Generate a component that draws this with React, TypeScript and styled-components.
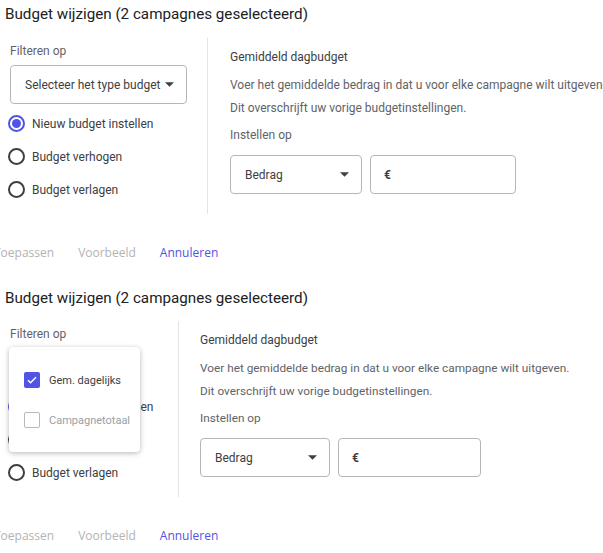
import React from "react";
import styled, { createGlobalStyle } from "styled-components";

const GlobalStyle = createGlobalStyle`
  html, body {
    margin: 0;
    padding: 0;
    background: #ffffff;
    overflow: hidden;
  }
  body {
    font-family: Roboto, "Liberation Sans", sans-serif;
    color: #3c4043;
  }
`;

const ACCENT = "#5053e4";

const Page = styled.div`
  display: flex;
  flex-direction: column;
  width: 603px;
`;

const Section = styled.section<{ $first?: boolean }>`
  display: flex;
  flex-direction: column;
  margin-top: ${(p) => (p.$first ? "0" : "14px")};
`;

const Title = styled.h2`
  margin: 0;
  padding-left: 5px;
  height: 28px;
  line-height: 28px;
  font-family: Roboto, "Open Sans", sans-serif;
  font-size: 15.2px;
  font-weight: 400;
  color: #202124;
  white-space: nowrap;
`;

const Body = styled.div<{ $gap: number }>`
  display: flex;
  margin-top: ${(p) => p.$gap}px;
  height: 176px;
`;

const LeftCol = styled.div<{ $width: number }>`
  position: relative;
  width: ${(p) => p.$width}px;
  padding: 5px 0 0 10px;
  box-sizing: border-box;
  flex-shrink: 0;
`;

const Divider = styled.div`
  width: 1px;
  background: #e4e4e4;
`;

const RightCol = styled.div<{ $pad: number }>`
  display: flex;
  flex-direction: column;
  padding: 11px 0 0 ${(p) => p.$pad}px;
  flex: 1;
  min-width: 0;
`;

const Label = styled.div`
  font-size: 12px;
  line-height: 16px;
  color: #5f6368;
`;

const SelectBox = styled.div<{ $width: number }>`
  display: flex;
  align-items: center;
  justify-content: space-between;
  box-sizing: border-box;
  width: ${(p) => p.$width}px;
  height: 39px;
  padding: 0 12px 0 14px;
  border: 1px solid #b4b6ba;
  border-radius: 4px;
  font-size: 12px;
  color: #3c4043;
  background: #fff;
  white-space: nowrap;
`;

const FilterSelect = styled(SelectBox)`
  margin-top: 6px;
`;

const SelectSlot = styled.div`
  height: 45px;
`;

const RadioList = styled.div`
  display: flex;
  flex-direction: column;
  margin-top: 3px;
`;

const RadioRow = styled.label`
  display: flex;
  align-items: center;
  height: 33px;
  gap: 7px;
  font-size: 12px;
  color: #3c4043;
  white-space: nowrap;
  margin-left: -2px;
`;

const RadioCircle = styled.span<{ $checked?: boolean }>`
  box-sizing: border-box;
  width: 17px;
  height: 17px;
  border-radius: 50%;
  border: 2px solid ${(p) => (p.$checked ? ACCENT : "#3c4043")};
  display: flex;
  align-items: center;
  justify-content: center;
  &::after {
    content: "";
    width: 9px;
    height: 9px;
    border-radius: 50%;
    background: ${(p) => (p.$checked ? ACCENT : "transparent")};
  }
`;

const Heading = styled.div`
  font-size: 12px;
  line-height: 16px;
  color: #3c4043;
  white-space: nowrap;
`;

const Info = styled.div<{ $mt: number; $size: number }>`
  margin-top: ${(p) => p.$mt}px;
  font-size: ${(p) => p.$size}px;
  line-height: 16px;
  color: #5f6368;
  white-space: nowrap;
`;

const Inputs = styled.div`
  display: flex;
  gap: 8px;
  margin-top: 12px;
`;

const AmountBox = styled.div<{ $width: number }>`
  display: flex;
  align-items: center;
  box-sizing: border-box;
  width: ${(p) => p.$width}px;
  height: 39px;
  padding-left: 13px;
  border: 1px solid #b4b6ba;
  border-radius: 4px;
  font-size: 12px;
  font-weight: 700;
  color: #3c4043;
`;

const Actions = styled.div`
  display: flex;
  height: 36px;
  margin-top: 20px;
  margin-left: -18px;
`;

const TextButton = styled.button<{ $primary?: boolean }>`
  border: 0;
  background: none;
  padding: 0 12px;
  font-family: "Open Sans", Roboto, sans-serif;
  font-size: 12px;
  font-weight: ${(p) => (p.$primary ? 500 : 400)};
  color: ${(p) => (p.$primary ? ACCENT : "#b3b3b3")};
  cursor: pointer;
`;

const Menu = styled.div`
  position: absolute;
  top: 26px;
  left: 9px;
  width: 131px;
  height: 105px;
  box-sizing: border-box;
  padding-top: 13px;
  background: #fff;
  border-radius: 4px;
  box-shadow: 0 1px 4px rgba(0, 0, 0, 0.22), 0 2px 8px rgba(0, 0, 0, 0.08);
`;

const MenuItem = styled.div<{ $disabled?: boolean }>`
  display: flex;
  align-items: center;
  gap: 9px;
  height: 40px;
  padding-left: 15px;
  font-size: 11px;
  color: ${(p) => (p.$disabled ? "#9aa0a6" : "#3c4043")};
  white-space: nowrap;
`;

const Checkbox = styled.span<{ $checked?: boolean }>`
  box-sizing: border-box;
  width: 16px;
  height: 16px;
  border-radius: 2px;
  border: ${(p) => (p.$checked ? "none" : "1.5px solid #b8b8b8")};
  background: ${(p) => (p.$checked ? ACCENT : "#fff")};
  display: flex;
  align-items: center;
  justify-content: center;
`;

const Caret = () => (
  <svg width="9" height="5" viewBox="0 0 10 5">
    <polygon points="0,0 10,0 5,5" fill="#3c4043" />
  </svg>
);

const Check = () => (
  <svg width="12" height="12" viewBox="0 0 24 24">
    <path d="M4 12.5l5 5L20 6.5" fill="none" stroke="#fff" strokeWidth="3" />
  </svg>
);

interface PanelProps {
  first?: boolean;
  leftWidth: number;
  rightPad: number;
  bodyGap: number;
  bedragWidth: number;
  euroWidth: number;
  infoSize: number;
  menuOpen?: boolean;
}

const Panel = ({
  first,
  leftWidth,
  rightPad,
  bodyGap,
  bedragWidth,
  euroWidth,
  infoSize,
  menuOpen,
}: PanelProps) => (
  <Section $first={first}>
    <Title>Budget wijzigen (2 campagnes geselecteerd)</Title>
    <Body $gap={bodyGap}>
      <LeftCol $width={leftWidth}>
        <Label>Filteren op</Label>
        {menuOpen ? (
          <SelectSlot />
        ) : (
          <FilterSelect $width={177}>
            Selecteer het type budget
            <Caret />
          </FilterSelect>
        )}
        <RadioList>
          <RadioRow>
            <RadioCircle $checked />
            Nieuw budget instellen
          </RadioRow>
          <RadioRow>
            <RadioCircle />
            Budget verhogen
          </RadioRow>
          <RadioRow>
            <RadioCircle />
            Budget verlagen
          </RadioRow>
        </RadioList>
        {menuOpen && (
          <Menu>
            <MenuItem>
              <Checkbox $checked>
                <Check />
              </Checkbox>
              Gem. dagelijks
            </MenuItem>
            <MenuItem $disabled>
              <Checkbox />
              Campagnetotaal
            </MenuItem>
          </Menu>
        )}
      </LeftCol>
      <Divider />
      <RightCol $pad={rightPad}>
        <Heading>Gemiddeld dagbudget</Heading>
        <Info $mt={12} $size={infoSize}>
          Voer het gemiddelde bedrag in dat u voor elke campagne wilt uitgeven.
        </Info>
        <Info $mt={7} $size={infoSize}>
          Dit overschrijft uw vorige budgetinstellingen.
        </Info>
        <Info $mt={11} $size={infoSize}>
          Instellen op
        </Info>
        <Inputs>
          <SelectBox $width={bedragWidth}>
            Bedrag
            <Caret />
          </SelectBox>
          <AmountBox $width={euroWidth}>€</AmountBox>
        </Inputs>
      </RightCol>
    </Body>
    <Actions>
      <TextButton>Toepassen</TextButton>
      <TextButton>Voorbeeld</TextButton>
      <TextButton $primary>Annuleren</TextButton>
    </Actions>
  </Section>
);

export default function App() {
  return (
    <Page>
      <GlobalStyle />
      <Panel
        first
        leftWidth={207}
        rightPad={22}
        bodyGap={10}
        bedragWidth={132}
        euroWidth={146}
        infoSize={12}
      />
      <Panel
        leftWidth={178}
        rightPad={21}
        bodyGap={9}
        bedragWidth={130}
        euroWidth={143}
        infoSize={11.8}
        menuOpen
      />
    </Page>
  );
}
